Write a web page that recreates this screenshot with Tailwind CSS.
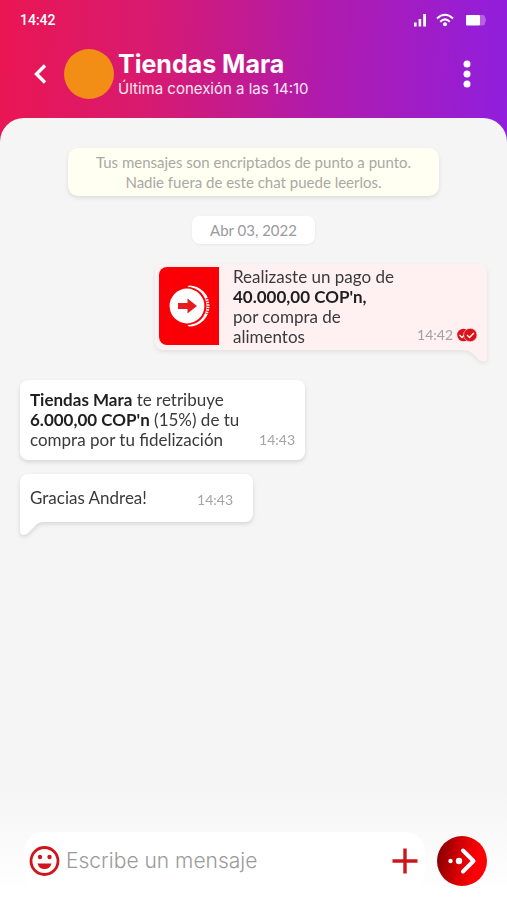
<!DOCTYPE html>
<html lang="es">
<head>
<meta charset="utf-8">
<meta name="viewport" content="width=device-width, initial-scale=1">
<title>Tiendas Mara</title>
<script src="https://cdn.jsdelivr.net/npm/@tailwindcss/browser@4"></script>
</head>
<body class="flex min-h-screen flex-col bg-white font-['Lato',sans-serif] text-[#3a3a3c]">
  <div class="flex flex-1 flex-col bg-[linear-gradient(92deg,#ea1653_0%,#d81a70_28%,#b01bad_60%,#8c1fe4_100%)]">
  <header class="px-5 font-['Inter',sans-serif] text-white">
    <div class="flex h-10 items-center justify-between font-['Roboto',sans-serif]">
      <time class="text-sm font-medium">14:42</time>
      <div class="flex items-center gap-2">
        <svg class="h-4 w-4" viewBox="0 0 16 16" fill="currentColor" role="img" aria-label="Señal"><rect x="3" y="10.500" width="2.600" height="4"/><rect x="7.600" y="7" width="2.600" height="7.500"/><rect x="12.200" y="2" width="2.800" height="12.500"/></svg>
        <svg class="h-4 w-5" viewBox="0 0 20 16" fill="none" stroke="currentColor" stroke-width="2" role="img" aria-label="Wifi"><path d="M2 6.500Q10-1 18 6.500M5.200 9.700Q10 5 14.800 9.700"/><circle cx="10" cy="12.300" r="2" fill="currentColor" stroke="none"/></svg>
        <svg class="h-4 w-6" viewBox="0 0 24 16" fill="currentColor" role="img" aria-label="Batería"><rect x="3" y="3" width="14" height="10.500" rx="1"/><path opacity=".3" d="M17 3h3q2 0 2 2v1q1 0 1 2t-1 2v1.500q0 2-2 2h-3z"/></svg>
      </div>
    </div>
    <div class="flex h-[78px] items-start pt-2">
      <button class="flex h-[52px] w-11 items-center pl-3" aria-label="Volver"><svg class="h-5 w-4" viewBox="0 0 16 20" fill="none" stroke="currentColor" stroke-width="3.400"><path d="M13 1.500L4.500 10l8.500 8.500"/></svg></button>
      <div class="mt-px size-[50px] shrink-0 rounded-full bg-[#f28d15]"></div>
      <div class="ml-1 flex-1">
        <h1 class="text-[25px] leading-8 font-bold">Tiendas Mara</h1>
        <p class="text-[15px] leading-[18px] text-white/90">Última conexión a las 14:10</p>
      </div>
      <button class="flex h-[52px] w-10 items-center justify-center" aria-label="Más opciones"><svg class="h-7 w-2" viewBox="0 0 8 28" fill="currentColor"><circle cx="4" cy="4" r="3.500"/><circle cx="4" cy="14" r="3.500"/><circle cx="4" cy="24" r="3.500"/></svg></button>
    </div>
  </header>

  <main class="flex flex-1 flex-col rounded-t-[24px] bg-[linear-gradient(to_bottom,#f5f5f5_0%,#f5f5f5_86%,#ffffff_99%)]">
    <section class="flex flex-1 flex-col px-5 pt-[30px]" aria-label="Conversación">
      <p class="mx-12 rounded-[10px] bg-[#fffff2] py-1 text-center text-[15px] leading-5 text-[#a9a9a4] shadow-[0_2px_4px_rgba(0,0,0,0.1)]">Tus mensajes son encriptados de punto a punto.<br>Nadie fuera de este chat puede leerlos.</p>
      <p class="mt-5 self-center rounded-lg bg-white px-[18px] py-1 text-[15px] leading-5 text-[#9a9a9e] shadow-[0_1px_3px_rgba(0,0,0,0.06)]">Abr 03, 2022</p>

      <article class="relative mt-5 flex w-[332px] self-end rounded-lg rounded-br-none bg-[#fff1f2] px-1 py-[3px] drop-shadow-[0_2px_2px_rgba(0,0,0,0.08)]">
        <div class="flex h-[78px] w-[60px] shrink-0 items-center justify-center rounded-l-lg bg-[#fa0006]">
          <svg class="h-[44px] w-[44px]" viewBox="0 0 44 44" role="img" aria-label="Pago"><path d="M22 1.500A20.500 20.500 0 0 1 22 42.500L20.500 41A19 19 0 0 0 20.500 3z" fill="#fff"/><circle cx="20" cy="22" r="18.600" fill="#fa0006"/><circle cx="20" cy="22" r="17.400" fill="#fff"/><path d="M40.500 14Q43 22 40.500 30" fill="none" stroke="#fa0006" stroke-width="4" stroke-dasharray="1 1.600"/><path d="M11 19h9.500v-4.500l9.500 7.500-9.500 7.500V25H11z" fill="#e51b20"/></svg>
        </div>
        <p class="ml-[14px] flex-1 text-[17px] leading-5">Realizaste un pago de<br><strong class="text-[#1f1f21]">40.000,00 COP'n,</strong><br>por compra de<br>alimentos</p>
        <div class="flex items-center gap-1 self-end pr-[6px] pb-1 text-sm leading-4 text-[#a4a0a2]">
          <time>14:42</time>
          <svg class="h-4 w-5" viewBox="0 0 20 16" role="img" aria-label="Leído"><circle cx="6.500" cy="8" r="6.300" fill="#dc1219"/><path d="M2.500 8l2.500 2.500L9 6" fill="none" stroke="#fff" stroke-width="1.300"/><circle cx="13.300" cy="8" r="6.700" fill="#dc1219" stroke="#fff0f1" stroke-width=".6"/><path d="M10 8l2.500 2.500 4.400-4.500" fill="none" stroke="#fff" stroke-width="1.300"/></svg>
        </div>
        <svg class="absolute top-full right-0 h-3 w-6" viewBox="0 0 24 12" fill="#fff1f2" aria-hidden="true"><path d="M0 0h24v7q0 5-4 4.500-2 0-4-2L9 3Q6 0 0 0z"/></svg>
      </article>

      <article class="mt-[30px] flex w-[285px] self-start rounded-lg bg-white px-[10px] py-[10px] drop-shadow-[0_2px_2px_rgba(0,0,0,0.13)]">
        <p class="flex-1 text-[17px] leading-5 whitespace-nowrap"><strong class="text-[#1f1f21]">Tiendas Mara</strong> te retribuye<br><strong class="text-[#1f1f21]">6.000,00 COP'n</strong> (15%) de tu<br>compra por tu fidelización</p>
        <time class="self-end text-sm leading-5 text-[#a4a4a4]">14:43</time>
      </article>

      <article class="relative mt-[14px] flex w-[233px] justify-between self-start rounded-lg rounded-bl-none bg-white px-[10px] py-[14px] drop-shadow-[0_2px_2px_rgba(0,0,0,0.13)]">
        <p class="text-[17px] leading-5">Gracias Andrea!</p>
        <time class="-mb-1 pr-[10px] text-sm leading-6 text-[#a4a4a4]">14:43</time>
        <svg class="absolute top-full left-0 h-[14px] w-6" viewBox="0 0 24 14" fill="#fff" aria-hidden="true"><path d="M24 0H0v8q0 5 4 5 2 0 4-2l7-7q3-4 9-4z"/></svg>
      </article>
    </section>

    <form class="flex items-center gap-3 pt-2 pr-5 pb-[10px] pl-6" onsubmit="return false">
      <div class="flex h-[58px] min-w-0 flex-1 items-center rounded-[20px] bg-white pr-[6px] pl-1">
        <button type="button" class="shrink-0" aria-label="Emojis"><svg class="size-8" viewBox="0 0 32 32"><circle cx="16.500" cy="16" r="13.500" fill="none" stroke="#cf151b" stroke-width="2.800"/><circle cx="12" cy="12" r="2.200" fill="#cf151b"/><circle cx="21.500" cy="12" r="2.200" fill="#cf151b"/><path d="M9.500 18.500h14q-1.500 5.500-7 5.500t-7-5.500z" fill="#cf151b"/></svg></button>
        <input type="text" aria-label="Mensaje" placeholder="Escribe un mensaje" class="ml-[6px] min-w-0 flex-1 bg-transparent font-['Inter',sans-serif] text-[21px] font-light text-[#3a3a3c] outline-none placeholder:text-[#9a9a9a]">
        <button type="button" class="shrink-0" aria-label="Adjuntar"><svg class="size-7" viewBox="0 0 28 28" stroke="#cf151b" stroke-width="3.400"><path d="M14 1.500v25M1.500 14h25"/></svg></button>
      </div>
      <button type="submit" class="size-[50px] shrink-0 rounded-full bg-[linear-gradient(100deg,#7c0000_0%,#d60004_45%,#fc0006_75%)]" aria-label="Enviar"><svg class="size-[50px]" viewBox="0 0 50 50"><circle cx="13.500" cy="25" r="2.200" fill="#fff"/><circle cx="22" cy="25" r="3.200" fill="#fff"/><path d="M26 14.500L36.500 25 26 35.500" fill="none" stroke="#fff" stroke-width="4" stroke-linecap="round" stroke-linejoin="round"/></svg></button>
    </form>
  </main>
  </div>
</body>
</html>
